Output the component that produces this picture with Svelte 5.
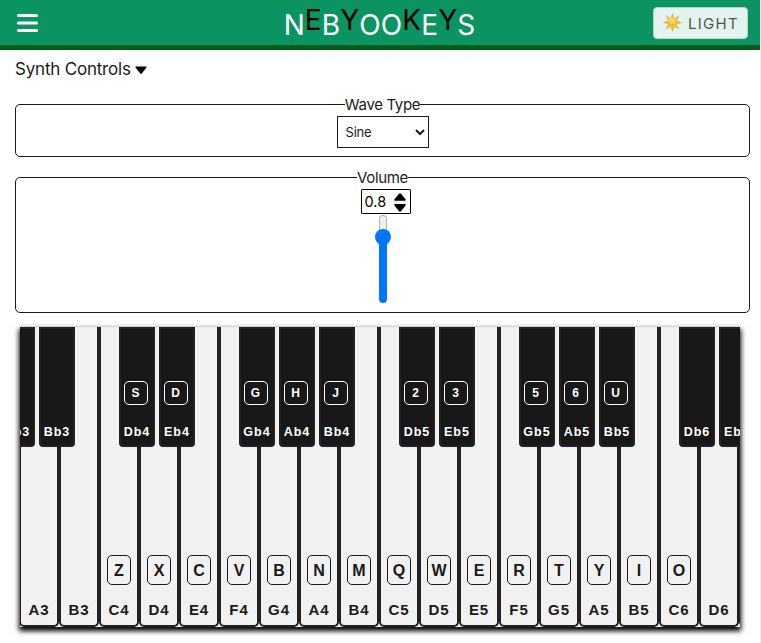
<script>
  const letters = 'NEBYOOKEYS'.split('').map((c, i) => ({ c, sharp: [1, 3, 6, 8].includes(i) }));
  const names = ['A', 'B', 'C', 'D', 'E', 'F', 'G'];
  const binds = { C4: 'Z', D4: 'X', E4: 'C', F4: 'V', G4: 'B', A4: 'N', B4: 'M', C5: 'Q', D5: 'W', E5: 'E', F5: 'R', G5: 'T', A5: 'Y', B5: 'I', C6: 'O',
    Db4: 'S', Eb4: 'D', Gb4: 'G', Ab4: 'H', Bb4: 'J', Db5: '2', Eb5: '3', Gb5: '5', Ab5: '6', Bb5: 'U' };
  // Each white key carries the flat that sits on its left edge, if it has one.
  // The last key lies past the edge of the keyboard; only its flat shows.
  const count = 19;
  const keys = Array.from({ length: count }, (_, i) => {
    const n = names[i % 7];
    const octave = 3 + Math.floor((i + 5) / 7);
    return { note: n + octave, labelled: i < count - 1, flat: n === 'C' || n === 'F' ? null : n + 'b' + octave };
  });
  let wave = $state('Sine');
  let volume = $state(0.8);
</script>

<div class="page">
  <header>
    <svg class="menu" width="21" height="18" viewBox="0 0 21 18"><path d="M1.5 1.5h18M1.5 9h18M1.5 16.5h18" stroke="#fff" stroke-width="3" stroke-linecap="round" /></svg>
    <h1>{#each letters as l}<span class:sharp={l.sharp}>{l.c}</span>{/each}</h1>
    <button class="theme">
      <svg width="19" height="19" viewBox="0 0 19 19">
        <path d="M9.5 0l1.5 4-1.500 2L8 4zM9.500 19l1.500-4-1.500-2L8 15zM0 9.500L4 8l2 1.500L4 11zM19 9.500L15 8l-2 1.500 2 1.500zM2.700 2.700l4 1.800-2.200 2.200zM16.300 2.700l-1.800 4-2.200-2.200zM2.700 16.300l1.800-4 2.200 2.200zM16.300 16.300l-4-1.800 2.200-2.200z" fill="#deb15c" />
        <circle cx="9.500" cy="9.500" r="5.200" fill="#f2bd35" />
        <circle cx="9" cy="8" r="3" fill="#f9d75a" />
      </svg>
      <span>LIGHT</span>
    </button>
  </header>

  <main>
    <div class="summary">
      <span>Synth Controls</span>
      <svg width="12" height="8" viewBox="0 0 12 8"><path d="M1 .5h10q1 .2.4 1.1L7 7.200q-1 1-2 0L.6 1.600Q0 .7 1 .5z" /></svg>
    </div>

    <fieldset class="wave">
      <legend>Wave Type</legend>
      <select bind:value={wave}>
        <option>Sine</option>
        <option>Square</option>
        <option>Sawtooth</option>
        <option>Triangle</option>
      </select>
    </fieldset>

    <fieldset class="volume">
      <legend>Volume</legend>
      <div class="number">
        <span>{volume}</span>
        <svg width="12" height="19" viewBox="0 0 12 19"><path d="M5 .8q1-.9 2 0l4.600 5.500q.5 1.200-.6 1.400H1Q-.1 7.500.4 6.300zM1 11h10q1.100.2.6 1.400L7 18.200q-1 .9-2 0L.4 12.400Q-.1 11.200 1 11z" /></svg>
      </div>
      <div class="slider">
        <div class="rest" style:flex={1 - volume}></div>
        <div class="thumb"></div>
        <div class="level" style:flex={volume}></div>
      </div>
    </fieldset>

    <div class="piano">
      <div class="keys">
        {#each keys as k}
          <div class="white">
            {#if binds[k.note]}<kbd>{binds[k.note]}</kbd>{/if}
            {#if k.labelled}<span class="note">{k.note}</span>{/if}
            {#if k.flat}
              <div class="black">
                {#if binds[k.flat]}<kbd>{binds[k.flat]}</kbd>{/if}
                <span class="note">{k.flat}</span>
              </div>
            {/if}
          </div>
        {/each}
      </div>
    </div>
  </main>
</div>

<style>
  :global(body) { background: #fff; }
  .page { box-sizing: border-box; height: 643px; overflow: hidden; border-right: 1px solid #eee; font-family: Inter, "Liberation Sans", sans-serif; color: #1a1a1a; }
  header { box-sizing: border-box; height: 50px; padding: 0 12px; background: #0b9361; border-bottom: 5px solid #045b18; display: grid; grid-template-columns: 1fr auto 1fr; align-items: center; }
  .menu { margin-left: 5px; }
  h1 { margin: 0 1px 0 0; display: flex; font-size: 28px; font-weight: 400; line-height: 34px; letter-spacing: 0.1px; color: #fff; padding-top: 5px; }
  .sharp { color: #000; margin-top: -5px; }
  .theme { justify-self: end; box-sizing: border-box; width: 95px; height: 32px; padding: 0 8px 0 9px; display: flex; align-items: center; justify-content: space-between; border: 1px solid #b5d5c8; border-radius: 4px; background: #e4f3ed; color: #4a5a53; font: 15px Inter, sans-serif; letter-spacing: 1.300px; }
  .theme span { padding-top: 1px; }
  main { padding: 0 10px 0 15px; }
  .summary { display: flex; align-items: center; gap: 4px; height: 20px; padding-top: 9px; font-size: 17px; letter-spacing: -0.2px; }
  .summary svg { margin-top: 1px; }
  fieldset { box-sizing: border-box; width: 735px; margin: 0; padding: 0; border: 1px solid #1a1a1a; border-radius: 5px; display: flex; flex-direction: column; align-items: center; font-size: 15px; }
  legend { margin: 0 auto; padding: 1px 0 0; line-height: 16px; text-align: center; letter-spacing: -0.35px; }
  .wave { margin-top: 17px; height: 61px; }
  .volume { margin-top: 12px; height: 144px; }
  select { box-sizing: border-box; width: 92px; height: 32px; margin-top: 3px; padding: 0 3px 0 4px; border: 1px solid #1a1a1a; border-radius: 0; background: #fff; color: #1a1a1a; font: 13px Inter, sans-serif; letter-spacing: -0.2px; }
  .number { box-sizing: border-box; flex: none; width: 50px; height: 25px; margin: 3px 0 0 6px; padding: 0 4px 0 3px; border: 1px solid #000; border-radius: 1px; display: flex; align-items: center; justify-content: space-between; font-size: 14.500px; color: #000; }
  .number svg { margin-top: 2px; }
  .slider { width: 16px; height: 88px; margin-top: 1px; display: flex; flex-direction: column; align-items: center; }
  .slider div { box-sizing: border-box; width: 8px; }
  .rest { background: #efefef; border: 1px solid #b2b2b2; border-bottom: 0; border-radius: 4px 4px 0 0; }
  .slider .thumb { width: 16px; height: 16px; margin: -2px 0 -1px; flex: none; border-radius: 50%; background: #0075ff; }
  .level { background: #0075ff; border-radius: 0 0 4px 4px; }
  .piano { width: 720px; height: 300px; margin: 14px 0 0 5px; overflow: hidden; box-shadow: 0 3px 5px 1px #000; }
  .keys { display: flex; width: 760px; height: 300px; margin-left: -1px; }
  .white { position: relative; box-sizing: border-box; flex: none; width: 40px; height: 300px; padding-bottom: 6px; border: 2px solid #222; border-top: 0; border-radius: 0 0 5px 5px; background: #f1f1f1; display: flex; flex-direction: column; align-items: center; justify-content: flex-end; }
  .note, kbd { font-family: "Liberation Sans", Arial, sans-serif; font-weight: 700; }
  .note { font-size: 15px; line-height: 18px; letter-spacing: 0.9px; white-space: nowrap; }
  kbd { box-sizing: border-box; width: 24px; height: 30px; margin-bottom: 16px; border: 1px solid #1a1a1a; border-radius: 5px; font-size: 16px; line-height: 29px; text-align: center; }
  .black { position: absolute; z-index: 1; top: 0; left: -22px; box-sizing: border-box; width: 36px; height: 120px; padding-bottom: 5px; border: 2px solid #222; border-radius: 0 0 4px 4px; background: #181818; color: #fff; display: flex; flex-direction: column; align-items: center; justify-content: flex-end; }
  .black .note { font-size: 12.500px; line-height: 16px; letter-spacing: 1px; }
  .black kbd { height: 24px; margin: 0 3px 19px 0; border-color: #fff; font-size: 12px; line-height: 23px; }
</style>
